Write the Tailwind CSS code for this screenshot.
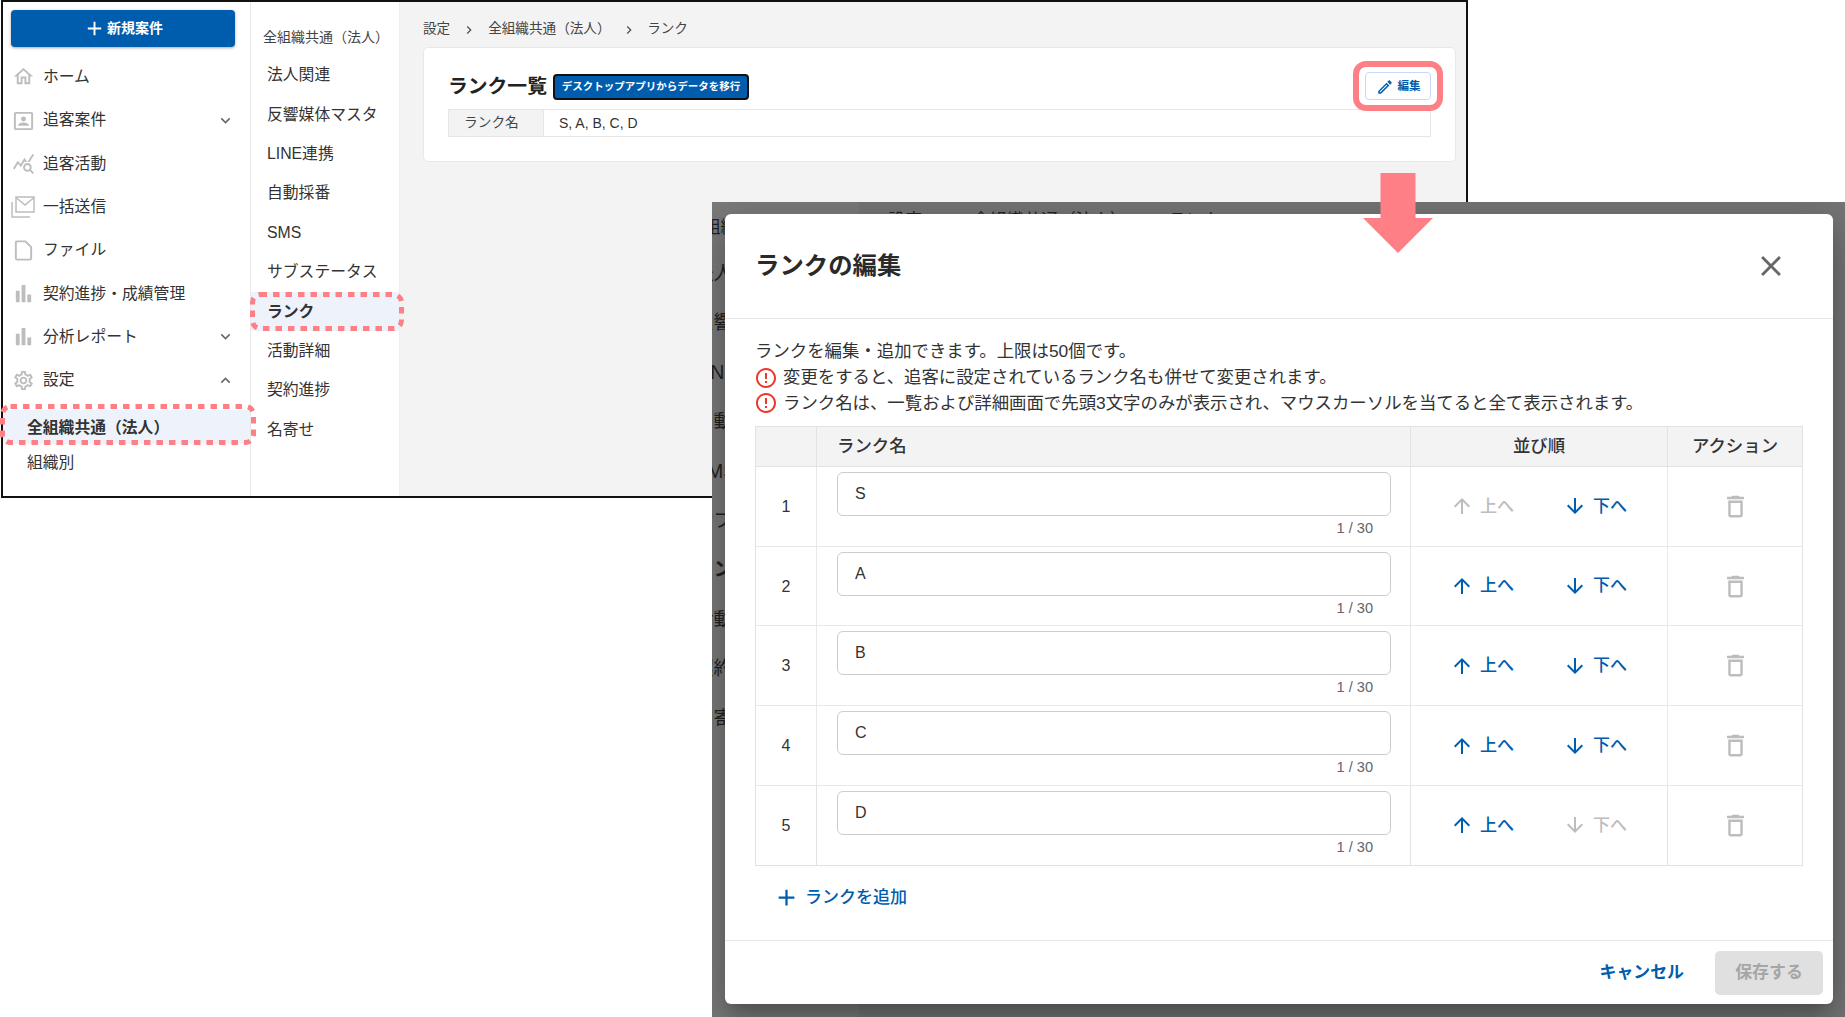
<!DOCTYPE html>
<html lang="ja">
<head>
<meta charset="utf-8">
<title>ランクの編集</title>
<script src="https://cdn.jsdelivr.net/npm/@tailwindcss/browser@4"></script>
</head>
<body class="m-0 bg-white">
<div class="relative w-[1845px] h-[1017px] overflow-hidden bg-white text-[#333] font-['Liberation_Sans','Noto_Sans_CJK_JP',sans-serif]">

  <!-- Window 1 -->
  <div class="absolute left-[1px] top-0 w-[1467px] h-[498px] border-2 border-[#111] flex overflow-hidden">
    <aside class="w-[248px] shrink-0 border-r border-[#e8e8e8] bg-white">
      <div class="pt-2 pl-2">
        <button class="w-[224px] h-[37px] rounded-[4px] bg-[#005cac] text-white text-[14px] font-bold flex items-center justify-center gap-[1px] shadow-[0_1px_3px_rgba(0,0,0,.35)]">
          <svg class="w-[23px] h-[23px]" viewBox="0 0 24 24" fill="currentColor"><path d="M19 13h-6v6h-2v-6H5v-2h6V5h2v6h6v2z"/></svg>新規案件
        </button>
      </div>
      <nav class="mt-[8.3px] text-[15.8px]">
        <div class="h-[43.3px] flex items-center pl-[9px] gap-[8px]"><svg class="w-[23px] h-[23px] text-[#bdbdbd]" viewBox="0 0 24 24" fill="currentColor"><path d="M12 5.69l5 4.5V18h-2v-6H9v6H7v-7.81l5-4.5M12 3L2 12h3v8h6v-6h2v6h6v-8h3L12 3z"/></svg>ホーム</div>
        <div class="h-[43.3px] flex items-center pl-[9px] gap-[8px]"><svg class="w-[23px] h-[23px] text-[#bdbdbd]" viewBox="0 0 24 24" fill="none" stroke="currentColor" stroke-width="2"><rect x="3" y="4" width="18" height="17" rx="1"/><circle cx="12" cy="10.5" r="2.6" fill="currentColor" stroke="none"/><path d="M6.5 17.5h11v-.6c0-1.9-3.6-2.8-5.5-2.8s-5.5.9-5.5 2.8z" fill="currentColor" stroke="none"/></svg><span class="flex-1">追客案件</span><svg class="w-[19px] h-[19px] mr-[15px] text-[#666]" viewBox="0 0 24 24" fill="currentColor"><path d="M16.59 8.59L12 13.17 7.41 8.59 6 10l6 6 6-6z"/></svg></div>
        <div class="h-[43.3px] flex items-center pl-[9px] gap-[8px]"><svg class="w-[23px] h-[23px] text-[#bdbdbd]" viewBox="0 0 24 24" fill="currentColor"><path d="M19.88 18.47c.44-.7.7-1.51.7-2.39 0-2.49-2.01-4.5-4.5-4.5s-4.5 2.01-4.5 4.5 2.01 4.5 4.49 4.5c.88 0 1.7-.26 2.39-.7L21.58 23 23 21.58l-3.12-3.11zm-3.8.11c-1.38 0-2.5-1.12-2.5-2.5s1.12-2.5 2.5-2.5 2.5 1.12 2.5 2.5-1.12 2.5-2.5 2.5zm-.36-8.5c-.74.02-1.45.18-2.1.45l-.55-.83-3.8 6.18-3.01-3.52-3.63 5.81L1 17l5-8 3 3.5L13 6l2.72 4.08zm2.59.5c-.64-.28-1.33-.45-2.05-.49L21.38 2 23 3.18l-4.69 7.4z"/></svg>追客活動</div>
        <div class="h-[43.3px] flex items-center pl-[8px] gap-[8px]"><svg class="w-[24px] h-[22px] text-[#bdbdbd]" viewBox="0 0 24 22" fill="none" stroke="currentColor" stroke-width="1.5"><path d="M1 6v15h18"/><rect x="5" y="1" width="18" height="15"/><path d="M5.5 2l8.5 7 8.5-7"/></svg>一括送信</div>
        <div class="h-[43.3px] flex items-center pl-[9px] gap-[8px]"><svg class="w-[23px] h-[23px] text-[#bdbdbd]" viewBox="0 0 24 24" fill="none" stroke="currentColor" stroke-width="2"><path d="M5 2.5h9l6 6V20a1.5 1.5 0 0 1-1.5 1.5h-13A1.5 1.5 0 0 1 4 20V3.500a1 1 0 0 1 1-1z"/></svg>ファイル</div>
        <div class="h-[43.3px] flex items-center pl-[9px] gap-[8px]"><svg class="w-[23px] h-[23px] text-[#bdbdbd]" viewBox="0 0 24 24" fill="currentColor"><path d="M4 9.2h4V21H4zM10 3h4v18h-4zm6 10h4v8h-4z"/></svg>契約進捗・成績管理</div>
        <div class="h-[43.3px] flex items-center pl-[9px] gap-[8px]"><svg class="w-[23px] h-[23px] text-[#bdbdbd]" viewBox="0 0 24 24" fill="currentColor"><path d="M4 9.2h4V21H4zM10 3h4v18h-4zm6 10h4v8h-4z"/></svg><span class="flex-1">分析レポート</span><svg class="w-[19px] h-[19px] mr-[15px] text-[#666]" viewBox="0 0 24 24" fill="currentColor"><path d="M16.59 8.59L12 13.17 7.41 8.59 6 10l6 6 6-6z"/></svg></div>
        <div class="h-[43.3px] flex items-center pl-[9px] gap-[8px]"><svg class="w-[23px] h-[23px] text-[#bdbdbd]" viewBox="0 0 24 24" fill="currentColor"><path d="M19.43 12.98c.04-.32.07-.64.07-.98 0-.34-.03-.66-.07-.98l2.11-1.65c.19-.15.24-.42.12-.64l-2-3.46c-.09-.16-.26-.25-.44-.25-.06 0-.12.01-.17.03l-2.49 1c-.52-.4-1.08-.73-1.69-.98l-.38-2.65C14.46 2.18 14.25 2 14 2h-4c-.25 0-.46.18-.49.42l-.38 2.65c-.61.25-1.17.59-1.69.98l-2.49-1c-.06-.02-.12-.03-.18-.03-.17 0-.34.09-.43.25l-2 3.46c-.13.22-.07.49.12.64l2.11 1.65c-.04.32-.07.65-.07.98 0 .33.03.66.07.98l-2.11 1.65c-.19.15-.24.42-.12.64l2 3.46c.09.16.26.25.44.25.06 0 .12-.01.17-.03l2.49-1c.52.4 1.08.73 1.69.98l.38 2.65c.03.24.24.42.49.42h4c.25 0 .46-.18.49-.42l.38-2.65c.61-.25 1.17-.59 1.69-.98l2.49 1c.06.02.12.03.18.03.17 0 .34-.09.43-.25l2-3.46c.12-.22.07-.49-.12-.64l-2.11-1.65zm-1.98-1.71c.04.31.05.52.05.73 0 .21-.02.43-.05.73l-.14 1.13.89.7 1.08.84-.7 1.21-1.27-.51-1.04-.42-.9.68c-.43.32-.84.56-1.25.73l-1.06.43-.16 1.13-.2 1.35h-1.4l-.19-1.35-.16-1.13-1.06-.43c-.43-.18-.83-.41-1.23-.71l-.91-.7-1.06.43-1.27.51-.7-1.21 1.08-.84.89-.7-.14-1.13c-.03-.31-.05-.54-.05-.74s.02-.43.05-.73l.14-1.13-.89-.7-1.08-.84.7-1.21 1.27.51 1.04.42.9-.68c.43-.32.84-.56 1.25-.73l1.06-.43.16-1.13.2-1.35h1.39l.19 1.35.16 1.13 1.06.43c.43.18.83.41 1.23.71l.91.7 1.06-.43 1.27-.51.7 1.21-1.07.85-.89.7.14 1.13zM12 8c-2.21 0-4 1.79-4 4s1.79 4 4 4 4-1.79 4-4-1.79-4-4-4zm0 6c-1.1 0-2-.9-2-2s.9-2 2-2 2 .9 2 2-.9 2-2 2z"/></svg><span class="flex-1">設定</span><svg class="w-[19px] h-[19px] mr-[15px] text-[#666]" viewBox="0 0 24 24" fill="currentColor"><path d="M12 8l-6 6 1.41 1.41L12 10.83l4.590 4.580L18 14z"/></svg></div>
        <div class="h-[34px] mt-[8.3px] flex items-center pl-[24px] pt-[2px] bg-[#eef3fb] font-bold">全組織共通（法人）</div>
        <div class="h-[37px] flex items-center pl-[24px] pt-[1px]">組織別</div>
      </nav>
    </aside>

    <aside class="w-[149px] shrink-0 border-r border-[#eee] bg-white">
      <div class="h-[53.3px] pt-[26px] pl-[12px] text-[14px] leading-[18px] text-[#444] whitespace-nowrap">全組織共通（法人）</div>
      <ul class="text-[15.8px]">
        <li class="h-[39.4px] flex items-center pl-[16px]">法人関連</li>
        <li class="h-[39.4px] flex items-center pl-[16px]">反響媒体マスタ</li>
        <li class="h-[39.4px] flex items-center pl-[16px]">LINE連携</li>
        <li class="h-[39.4px] flex items-center pl-[16px]">自動採番</li>
        <li class="h-[39.4px] flex items-center pl-[16px]">SMS</li>
        <li class="h-[39.4px] flex items-center pl-[16px]">サブステータス</li>
        <li class="h-[39.4px] flex items-center pl-[16px] pt-[1px] bg-[#eef3fb] font-bold">ランク</li>
        <li class="h-[39.4px] flex items-center pl-[16px]">活動詳細</li>
        <li class="h-[39.4px] flex items-center pl-[16px]">契約進捗</li>
        <li class="h-[39.4px] flex items-center pl-[16px]">名寄せ</li>
      </ul>
    </aside>

    <main class="flex-1 bg-[#f3f3f3] pl-[23px] pr-[10px]">
      <div class="h-[45px] pt-[10px] flex items-center text-[13.6px] text-[#444] whitespace-nowrap">
        <span>設定</span>
        <svg class="w-[16px] h-[16px] mx-[11px] text-[#555]" viewBox="0 0 24 24" fill="currentColor"><path d="M8.590 16.590L13.170 12 8.590 7.410 10 6l6 6-6 6z"/></svg>
        <span class="w-[123px]">全組織共通（法人）</span>
        <svg class="w-[16px] h-[16px] mx-[10px] text-[#555]" viewBox="0 0 24 24" fill="currentColor"><path d="M8.590 16.590L13.170 12 8.590 7.410 10 6l6 6-6 6z"/></svg>
        <span>ランク</span>
      </div>
      <section class="bg-white border border-[#e8e8e8] rounded-[5px] pt-[24px] pb-[24px] pl-[24px] pr-[24px]">
        <div class="flex items-center justify-between h-[28px]">
          <div class="flex items-center gap-[6px] pt-[1px]">
            <h2 class="text-[19.8px] font-bold text-[#222] pt-[1px]">ランク一覧</h2>
            <span class="h-[26px] w-[196px] rounded-[4px] border-2 border-[#111] bg-[#005cac] text-white text-[10.5px] font-bold flex items-center justify-center whitespace-nowrap">デスクトップアプリからデータを移行</span>
          </div>
          <button class="w-[66px] h-[28px] pt-[1px] rounded-[4px] border border-[#c9d9f3] bg-white text-[#005cac] text-[11.5px] font-bold flex items-center justify-center gap-[4px]">
            <svg class="w-[18px] h-[18px]" viewBox="0 0 24 24" fill="currentColor"><path d="M14.060 9.020l.92.92L5.920 19H5v-.92l9.060-9.060M17.660 3c-.25 0-.51.1-.7.29l-1.830 1.830 3.750 3.750 1.830-1.830c.39-.39.39-1.020 0-1.410l-2.340-2.340c-.2-.2-.45-.29-.71-.29zm-3.600 3.190L3 17.250V21h3.750L17.810 9.940l-3.750-3.750z"/></svg>編集
          </button>
        </div>
        <div class="mt-[9px] h-[28px] flex border border-[#e6e6e6] text-[14px]">
          <div class="w-[95px] bg-[#f3f3f3] border-r border-[#e6e6e6] flex items-center pl-[15px] pt-[1px] text-[13.7px] text-[#444]">ランク名</div>
          <div class="flex-1 flex items-center pl-[15px] pt-[1px] text-[#333]">S, A, B, C, D</div>
        </div>
      </section>
    </main>
  </div>

  <!-- Annotations on window 1 -->
  <svg class="absolute left-0 top-[400px] w-[260px] h-[50px] pointer-events-none" viewBox="0 0 260 50" fill="none"><rect x="2.5" y="6.5" width="251" height="36" rx="8" stroke="#ff7f86" stroke-width="5" stroke-dasharray="6.5 6"/></svg>
  <svg class="absolute left-[246px] top-[288px] w-[162px] h-[48px] pointer-events-none" viewBox="0 0 162 48" fill="none"><rect x="6.5" y="6.5" width="149" height="34" rx="8" stroke="#ff7f86" stroke-width="5" stroke-dasharray="6.5 6"/></svg>
  <div class="absolute left-[1353px] top-[61px] w-[90px] h-[50px] rounded-[13px] border-[6px] border-[#ff7f86]"></div>

  <!-- Window 2: modal on dimmed page -->
  <div class="absolute left-[712px] top-[202px] w-[1133px] h-[815px] overflow-hidden flex bg-[#777]">
    <div class="w-[147px] shrink-0 bg-[#7a7a7a] text-[#222] whitespace-nowrap">
      <div class="ml-[-25px] h-[24px] mt-[14px] flex items-center text-[16.8px]">全組織共通</div>
      <ul class="mt-[9px] ml-[-18px] text-[19.5px]">
        <li class="h-[49.4px] flex items-center">法人関連</li>
        <li class="h-[49.4px] flex items-center">反響媒体マスタ</li>
        <li class="h-[49.4px] flex items-center">LINE連携</li>
        <li class="h-[49.4px] flex items-center">自動採番</li>
        <li class="h-[49.4px] flex items-center">SMS</li>
        <li class="h-[49.4px] flex items-center">サブステータス</li>
        <li class="h-[49.4px] flex items-center font-bold">ランク</li>
        <li class="h-[49.4px] flex items-center">活動詳細</li>
        <li class="h-[49.4px] flex items-center">契約進捗</li>
        <li class="h-[49.4px] flex items-center">名寄せ</li>
      </ul>
    </div>
    <div class="flex-1 bg-[#757575] pl-[29px] pt-[6px] text-[17.2px] text-[#222] flex items-start whitespace-nowrap">
      <span>設定</span><span class="mx-[20px]">&gt;</span><span class="w-[146px]">全組織共通（法人）</span><span class="mx-[20px]">&gt;</span><span>ランク</span>
    </div>

    <div role="dialog" class="absolute left-[13px] top-[12px] w-[1108px] h-[790px] bg-white rounded-[6px] flex flex-col shadow-[0_11px_15px_-7px_rgba(0,0,0,.2),0_24px_38px_3px_rgba(0,0,0,.14),0_9px_46px_8px_rgba(0,0,0,.12)]">
      <header class="h-[105px] shrink-0 border-b border-[#e8e8e8] flex items-center justify-between pl-[30px] pr-[45px]">
        <h1 class="text-[24.4px] font-bold text-[#2a2a2a]">ランクの編集</h1>
        <svg class="w-[34px] h-[34px] text-[#666]" viewBox="0 0 24 24" fill="currentColor"><path d="M19 6.410L17.590 5 12 10.590 6.410 5 5 6.410 10.590 12 5 17.590 6.410 19 12 13.410 17.590 19 19 17.590 13.410 12z"/></svg>
      </header>

      <div class="flex-1 pt-[20px] text-[17.4px]">
        <div class="pl-[30px] leading-[25.8px]">
          <p>ランクを編集・追加できます。上限は50個です。</p>
          <p class="flex items-center gap-[5px]"><svg class="w-[24px] h-[24px] ml-[-1px] text-[#f0352b]" viewBox="0 0 24 24" fill="currentColor"><path d="M11 15h2v2h-2zm0-8h2v6h-2zm.99-5C6.470 2 2 6.480 2 12s4.470 10 9.990 10C17.520 22 22 17.520 22 12S17.520 2 11.990 2zM12 20c-4.420 0-8-3.580-8-8s3.580-8 8-8 8 3.580 8 8-3.580 8-8 8z"/></svg>変更をすると、追客に設定されているランク名も併せて変更されます。</p>
          <p class="flex items-center gap-[5px]"><svg class="w-[24px] h-[24px] ml-[-1px] text-[#f0352b]" viewBox="0 0 24 24" fill="currentColor"><path d="M11 15h2v2h-2zm0-8h2v6h-2zm.99-5C6.470 2 2 6.480 2 12s4.470 10 9.990 10C17.520 22 22 17.520 22 12S17.520 2 11.990 2zM12 20c-4.420 0-8-3.580-8-8s3.580-8 8-8 8 3.580 8 8-3.580 8-8 8z"/></svg>ランク名は、一覧および詳細画面で先頭3文字のみが表示され、マウスカーソルを当てると全て表示されます。</p>
        </div>

        <div class="mt-[9.5px] ml-[30px] w-[1048px] border border-[#e2e2e2] border-b-0 grid grid-cols-[61px_594px_257px_134px]">
          <div class="h-[40px] bg-[#f3f3f3] border-r border-b border-[#e2e2e2]"></div>
          <div class="h-[40px] bg-[#f3f3f3] border-r border-b border-[#e2e2e2] flex items-center pl-[20px] font-medium">ランク名</div>
          <div class="h-[40px] bg-[#f3f3f3] border-r border-b border-[#e2e2e2] flex items-center justify-center font-medium">並び順</div>
          <div class="h-[40px] bg-[#f3f3f3] border-b border-[#e2e2e2] flex items-center justify-center font-medium">アクション</div>

          <!-- Row 1 -->
          <div class="h-[79.8px] border-r border-b border-[#e8e8e8] flex items-center justify-center pt-[1px] text-[16px]">1</div>
          <div class="h-[79.8px] border-r border-b border-[#e8e8e8] pl-[20px] pr-[19px] pt-[5px]"><input value="S" class="w-full h-[44px] border border-[#ccc] rounded-[6px] pl-[17px] text-[16px] text-[#333]"><p class="text-right pr-[18px] text-[14.6px] leading-[24px] text-[#666]">1 / 30</p></div>
          <div class="h-[79.8px] border-r border-b border-[#e8e8e8] flex items-center pl-[39px] text-[17px] font-medium"><span class="w-[113px] flex items-center gap-[6px] text-[#bdbdbd]"><svg class="w-[24px] h-[24px]" viewBox="0 0 24 24" fill="currentColor"><path d="M4 12l1.410 1.410L11 7.830V20h2V7.830l5.580 5.590L20 12l-8-8-8 8z"/></svg>上へ</span><span class="flex items-center gap-[6px] text-[#005cac]"><svg class="w-[24px] h-[24px]" viewBox="0 0 24 24" fill="currentColor"><path d="M20 12l-1.410-1.410L13 16.170V4h-2v12.170l-5.580-5.590L4 12l8 8 8-8z"/></svg>下へ</span></div>
          <div class="h-[79.8px] border-b border-[#e8e8e8] flex items-center justify-center"><svg class="w-[29px] h-[29px] text-[#bdbdbd]" viewBox="0 0 24 24" fill="currentColor"><path d="M16 9v10H8V9h8m-1.500-6h-5l-1 1H5v2h14V4h-3.500l-1-1zM18 7H6v12c0 1.100.9 2 2 2h8c1.100 0 2-.9 2-2V7z"/></svg></div>

          <!-- Row 2 -->
          <div class="h-[79.8px] border-r border-b border-[#e8e8e8] flex items-center justify-center pt-[1px] text-[16px]">2</div>
          <div class="h-[79.8px] border-r border-b border-[#e8e8e8] pl-[20px] pr-[19px] pt-[5px]"><input value="A" class="w-full h-[44px] border border-[#ccc] rounded-[6px] pl-[17px] text-[16px] text-[#333]"><p class="text-right pr-[18px] text-[14.6px] leading-[24px] text-[#666]">1 / 30</p></div>
          <div class="h-[79.8px] border-r border-b border-[#e8e8e8] flex items-center pl-[39px] text-[17px] font-medium"><span class="w-[113px] flex items-center gap-[6px] text-[#005cac]"><svg class="w-[24px] h-[24px]" viewBox="0 0 24 24" fill="currentColor"><path d="M4 12l1.410 1.410L11 7.830V20h2V7.830l5.580 5.590L20 12l-8-8-8 8z"/></svg>上へ</span><span class="flex items-center gap-[6px] text-[#005cac]"><svg class="w-[24px] h-[24px]" viewBox="0 0 24 24" fill="currentColor"><path d="M20 12l-1.410-1.410L13 16.170V4h-2v12.170l-5.580-5.590L4 12l8 8 8-8z"/></svg>下へ</span></div>
          <div class="h-[79.8px] border-b border-[#e8e8e8] flex items-center justify-center"><svg class="w-[29px] h-[29px] text-[#bdbdbd]" viewBox="0 0 24 24" fill="currentColor"><path d="M16 9v10H8V9h8m-1.500-6h-5l-1 1H5v2h14V4h-3.500l-1-1zM18 7H6v12c0 1.100.9 2 2 2h8c1.100 0 2-.9 2-2V7z"/></svg></div>

          <!-- Row 3 -->
          <div class="h-[79.8px] border-r border-b border-[#e8e8e8] flex items-center justify-center pt-[1px] text-[16px]">3</div>
          <div class="h-[79.8px] border-r border-b border-[#e8e8e8] pl-[20px] pr-[19px] pt-[5px]"><input value="B" class="w-full h-[44px] border border-[#ccc] rounded-[6px] pl-[17px] text-[16px] text-[#333]"><p class="text-right pr-[18px] text-[14.6px] leading-[24px] text-[#666]">1 / 30</p></div>
          <div class="h-[79.8px] border-r border-b border-[#e8e8e8] flex items-center pl-[39px] text-[17px] font-medium"><span class="w-[113px] flex items-center gap-[6px] text-[#005cac]"><svg class="w-[24px] h-[24px]" viewBox="0 0 24 24" fill="currentColor"><path d="M4 12l1.410 1.410L11 7.830V20h2V7.830l5.580 5.590L20 12l-8-8-8 8z"/></svg>上へ</span><span class="flex items-center gap-[6px] text-[#005cac]"><svg class="w-[24px] h-[24px]" viewBox="0 0 24 24" fill="currentColor"><path d="M20 12l-1.410-1.410L13 16.170V4h-2v12.170l-5.580-5.590L4 12l8 8 8-8z"/></svg>下へ</span></div>
          <div class="h-[79.8px] border-b border-[#e8e8e8] flex items-center justify-center"><svg class="w-[29px] h-[29px] text-[#bdbdbd]" viewBox="0 0 24 24" fill="currentColor"><path d="M16 9v10H8V9h8m-1.500-6h-5l-1 1H5v2h14V4h-3.500l-1-1zM18 7H6v12c0 1.100.9 2 2 2h8c1.100 0 2-.9 2-2V7z"/></svg></div>

          <!-- Row 4 -->
          <div class="h-[79.8px] border-r border-b border-[#e8e8e8] flex items-center justify-center pt-[1px] text-[16px]">4</div>
          <div class="h-[79.8px] border-r border-b border-[#e8e8e8] pl-[20px] pr-[19px] pt-[5px]"><input value="C" class="w-full h-[44px] border border-[#ccc] rounded-[6px] pl-[17px] text-[16px] text-[#333]"><p class="text-right pr-[18px] text-[14.6px] leading-[24px] text-[#666]">1 / 30</p></div>
          <div class="h-[79.8px] border-r border-b border-[#e8e8e8] flex items-center pl-[39px] text-[17px] font-medium"><span class="w-[113px] flex items-center gap-[6px] text-[#005cac]"><svg class="w-[24px] h-[24px]" viewBox="0 0 24 24" fill="currentColor"><path d="M4 12l1.410 1.410L11 7.830V20h2V7.830l5.580 5.590L20 12l-8-8-8 8z"/></svg>上へ</span><span class="flex items-center gap-[6px] text-[#005cac]"><svg class="w-[24px] h-[24px]" viewBox="0 0 24 24" fill="currentColor"><path d="M20 12l-1.410-1.410L13 16.170V4h-2v12.170l-5.580-5.590L4 12l8 8 8-8z"/></svg>下へ</span></div>
          <div class="h-[79.8px] border-b border-[#e8e8e8] flex items-center justify-center"><svg class="w-[29px] h-[29px] text-[#bdbdbd]" viewBox="0 0 24 24" fill="currentColor"><path d="M16 9v10H8V9h8m-1.500-6h-5l-1 1H5v2h14V4h-3.500l-1-1zM18 7H6v12c0 1.100.9 2 2 2h8c1.100 0 2-.9 2-2V7z"/></svg></div>

          <!-- Row 5 -->
          <div class="h-[79.8px] border-r border-b border-[#e2e2e2] flex items-center justify-center pt-[1px] text-[16px]">5</div>
          <div class="h-[79.8px] border-r border-b border-[#e2e2e2] pl-[20px] pr-[19px] pt-[5px]"><input value="D" class="w-full h-[44px] border border-[#ccc] rounded-[6px] pl-[17px] text-[16px] text-[#333]"><p class="text-right pr-[18px] text-[14.6px] leading-[24px] text-[#666]">1 / 30</p></div>
          <div class="h-[79.8px] border-r border-b border-[#e2e2e2] flex items-center pl-[39px] text-[17px] font-medium"><span class="w-[113px] flex items-center gap-[6px] text-[#005cac]"><svg class="w-[24px] h-[24px]" viewBox="0 0 24 24" fill="currentColor"><path d="M4 12l1.410 1.410L11 7.830V20h2V7.830l5.580 5.590L20 12l-8-8-8 8z"/></svg>上へ</span><span class="flex items-center gap-[6px] text-[#bdbdbd]"><svg class="w-[24px] h-[24px]" viewBox="0 0 24 24" fill="currentColor"><path d="M20 12l-1.410-1.410L13 16.170V4h-2v12.170l-5.580-5.590L4 12l8 8 8-8z"/></svg>下へ</span></div>
          <div class="h-[79.8px] border-b border-[#e2e2e2] flex items-center justify-center"><svg class="w-[29px] h-[29px] text-[#bdbdbd]" viewBox="0 0 24 24" fill="currentColor"><path d="M16 9v10H8V9h8m-1.500-6h-5l-1 1H5v2h14V4h-3.500l-1-1zM18 7H6v12c0 1.100.9 2 2 2h8c1.100 0 2-.9 2-2V7z"/></svg></div>
        </div>

        <button class="mt-[18px] ml-[48px] h-[28px] flex items-center gap-[5px] text-[17px] text-[#005cac] font-medium">
          <svg class="w-[27px] h-[27px]" viewBox="0 0 24 24" fill="currentColor"><path d="M19 13h-6v6h-2v-6H5v-2h6V5h2v6h6v2z"/></svg>ランクを追加
        </button>
      </div>

      <footer class="h-[64px] shrink-0 border-t border-[#e8e8e8] flex items-center justify-end gap-[31px] pr-[10px]">
        <button class="text-[16.9px] font-bold text-[#005cac]">キャンセル</button>
        <button class="w-[108px] h-[44px] rounded-[5px] bg-[#e0e0e0] text-[#a6a6a6] text-[16.9px] font-bold">保存する</button>
      </footer>
    </div>
  </div>

  <!-- Big arrow -->
  <svg class="absolute left-[1363px] top-[173px] w-[70px] h-[80px]" viewBox="0 0 70 80"><polygon points="17.5,0 52.5,0 52.5,45 70,45 35,80 0,45 17.5,45" fill="#ff7f86"/></svg>
</div>
</body>
</html>
